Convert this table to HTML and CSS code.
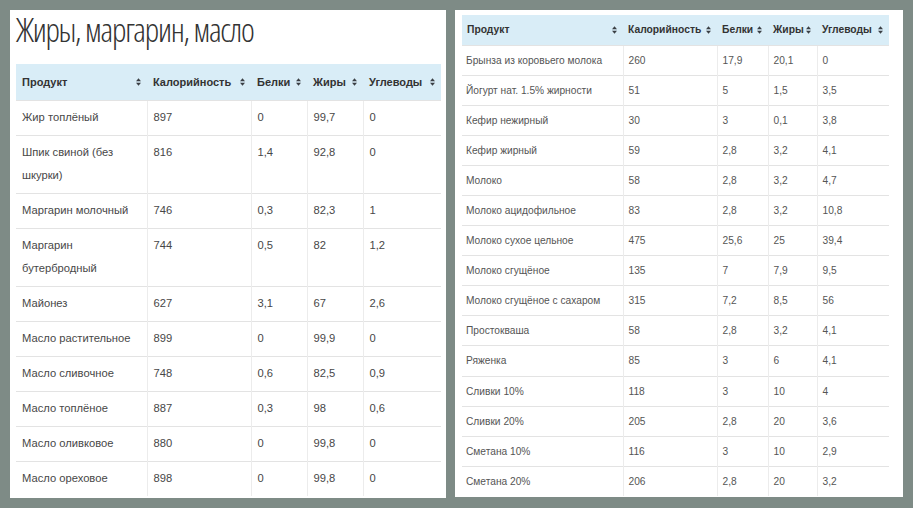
FILE: index.html
```html
<!DOCTYPE html>
<html lang="ru">
<head>
<meta charset="utf-8">
<link rel="stylesheet" href="styles.css">
</head>
<body>
<div class="page">
  <section class="panel panel-left">
    <h1 class="title">Жиры, маргарин, масло</h1>
    <table class="tbl tbl-left">
      <colgroup><col class="c1"><col class="c2"><col class="c3"><col class="c4"><col class="c5"></colgroup>
      <thead>
        <tr>
          <th><div class="th-in"><span>Продукт</span><svg class="sort" viewBox="0 0 6 9"><path d="M0 3.6L3 0L6 3.6Z M0 5.4L3 9L6 5.4Z"/></svg></div></th>
          <th><div class="th-in"><span>Калорийность</span><svg class="sort" viewBox="0 0 6 9"><path d="M0 3.6L3 0L6 3.6Z M0 5.4L3 9L6 5.4Z"/></svg></div></th>
          <th><div class="th-in"><span>Белки</span><svg class="sort" viewBox="0 0 6 9"><path d="M0 3.6L3 0L6 3.6Z M0 5.4L3 9L6 5.4Z"/></svg></div></th>
          <th><div class="th-in"><span>Жиры</span><svg class="sort" viewBox="0 0 6 9"><path d="M0 3.6L3 0L6 3.6Z M0 5.4L3 9L6 5.4Z"/></svg></div></th>
          <th><div class="th-in"><span>Углеводы</span><svg class="sort" viewBox="0 0 6 9"><path d="M0 3.6L3 0L6 3.6Z M0 5.4L3 9L6 5.4Z"/></svg></div></th>
        </tr>
      </thead>
      <tbody>
        <tr><td>Жир топлёный</td><td>897</td><td>0</td><td>99,7</td><td>0</td></tr>
        <tr><td>Шпик свиной (без шкурки)</td><td>816</td><td>1,4</td><td>92,8</td><td>0</td></tr>
        <tr><td>Маргарин молочный</td><td>746</td><td>0,3</td><td>82,3</td><td>1</td></tr>
        <tr><td>Маргарин бутербродный</td><td>744</td><td>0,5</td><td>82</td><td>1,2</td></tr>
        <tr><td>Майонез</td><td>627</td><td>3,1</td><td>67</td><td>2,6</td></tr>
        <tr><td>Масло растительное</td><td>899</td><td>0</td><td>99,9</td><td>0</td></tr>
        <tr><td>Масло сливочное</td><td>748</td><td>0,6</td><td>82,5</td><td>0,9</td></tr>
        <tr><td>Масло топлёное</td><td>887</td><td>0,3</td><td>98</td><td>0,6</td></tr>
        <tr><td>Масло оливковое</td><td>880</td><td>0</td><td>99,8</td><td>0</td></tr>
        <tr><td>Масло ореховое</td><td>898</td><td>0</td><td>99,8</td><td>0</td></tr>
      </tbody>
    </table>
  </section>
  <section class="panel panel-right">
    <table class="tbl tbl-right">
      <colgroup><col class="c1"><col class="c2"><col class="c3"><col class="c4"><col class="c5"></colgroup>
      <thead>
        <tr>
          <th><div class="th-in"><span>Продукт</span><svg class="sort" viewBox="0 0 6 9"><path d="M0 3.6L3 0L6 3.6Z M0 5.4L3 9L6 5.4Z"/></svg></div></th>
          <th><div class="th-in"><span>Калорийность</span><svg class="sort" viewBox="0 0 6 9"><path d="M0 3.6L3 0L6 3.6Z M0 5.4L3 9L6 5.4Z"/></svg></div></th>
          <th><div class="th-in"><span>Белки</span><svg class="sort" viewBox="0 0 6 9"><path d="M0 3.6L3 0L6 3.6Z M0 5.4L3 9L6 5.4Z"/></svg></div></th>
          <th><div class="th-in"><span>Жиры</span><svg class="sort" viewBox="0 0 6 9"><path d="M0 3.6L3 0L6 3.6Z M0 5.4L3 9L6 5.4Z"/></svg></div></th>
          <th><div class="th-in"><span>Углеводы</span><svg class="sort" viewBox="0 0 6 9"><path d="M0 3.6L3 0L6 3.6Z M0 5.4L3 9L6 5.4Z"/></svg></div></th>
        </tr>
      </thead>
      <tbody>
        <tr><td>Брынза из коровьего молока</td><td>260</td><td>17,9</td><td>20,1</td><td>0</td></tr>
        <tr><td>Йогурт нат. 1.5% жирности</td><td>51</td><td>5</td><td>1,5</td><td>3,5</td></tr>
        <tr><td>Кефир нежирный</td><td>30</td><td>3</td><td>0,1</td><td>3,8</td></tr>
        <tr><td>Кефир жирный</td><td>59</td><td>2,8</td><td>3,2</td><td>4,1</td></tr>
        <tr><td>Молоко</td><td>58</td><td>2,8</td><td>3,2</td><td>4,7</td></tr>
        <tr><td>Молоко ацидофильное</td><td>83</td><td>2,8</td><td>3,2</td><td>10,8</td></tr>
        <tr><td>Молоко сухое цельное</td><td>475</td><td>25,6</td><td>25</td><td>39,4</td></tr>
        <tr><td>Молоко сгущёное</td><td>135</td><td>7</td><td>7,9</td><td>9,5</td></tr>
        <tr><td>Молоко сгущёное с сахаром</td><td>315</td><td>7,2</td><td>8,5</td><td>56</td></tr>
        <tr><td>Простокваша</td><td>58</td><td>2,8</td><td>3,2</td><td>4,1</td></tr>
        <tr><td>Ряженка</td><td>85</td><td>3</td><td>6</td><td>4,1</td></tr>
        <tr><td>Сливки 10%</td><td>118</td><td>3</td><td>10</td><td>4</td></tr>
        <tr><td>Сливки 20%</td><td>205</td><td>2,8</td><td>20</td><td>3,6</td></tr>
        <tr><td>Сметана 10%</td><td>116</td><td>3</td><td>10</td><td>2,9</td></tr>
        <tr><td>Сметана 20%</td><td>206</td><td>2,8</td><td>20</td><td>3,2</td></tr>
      </tbody>
    </table>
  </section>
</div>
</body>
</html>
```

FILE: styles.css
```css
* { box-sizing: border-box; }
html, body { margin: 0; padding: 0; }
body {
  width: 913px;
  height: 508px;
  background: #7e8b86;
  font-family: "Liberation Sans", Arial, sans-serif;
  overflow: hidden;
}
.page {
  display: flex;
  gap: 9px;
  padding: 10px 0 0 10px;
  align-items: flex-start;
}
.panel {
  background: #fff;
}
.panel-left {
  width: 436px;
  height: 488px;
  padding: 0 5px 0 6px;
}
.panel-right {
  width: 448px;
  height: 487px;
  padding: 5px 0 0 7px;
}
.title {
  margin: 0;
  height: 54px;
  padding: 0;
  font-family: "Open Sans", "DejaVu Sans", sans-serif;
  font-stretch: 75%;
  font-weight: 300;
  font-size: 33px;
  line-height: 40px;
  color: #333;
  letter-spacing: -1.3px;
}
.tbl {
  border-collapse: collapse;
  table-layout: fixed;
}
.tbl th {
  background: #d9edf7;
  color: #333;
  font-weight: bold;
  text-align: left;
}
.th-in {
  display: flex;
  align-items: center;
  justify-content: space-between;
}
.sort {
  width: 5px;
  height: 8px;
  fill: #3a3f44;
  flex: none;
}
.tbl td {
  border-top: 1px solid #e3e3e3;
  vertical-align: top;
}
.tbl td + td { border-left: 1px solid #ececec; }

.tbl-left { width: 425px; }
.tbl-left .c1 { width: 131px; }
.tbl-left .c2 { width: 104px; }
.tbl-left .c3 { width: 56px; }
.tbl-left .c4 { width: 56px; }
.tbl-left .c5 { width: 78px; }
.tbl-left th {
  height: 36px;
  padding: 0 6px 0 6px;
  font-size: 11px;
}
.tbl-left td {
  font-size: 11.2px;
  line-height: 23px;
  padding: 5px 7px 6px 6px;
  color: #474747;
}

.tbl-right { width: 427px; }
.tbl-right .c1 { width: 161px; }
.tbl-right .c2 { width: 94px; }
.tbl-right .c3 { width: 51px; }
.tbl-right .c4 { width: 49px; }
.tbl-right .c5 { width: 72px; }
.tbl-right th {
  height: 30px;
  padding: 0 6px 0 5px;
  font-size: 10.3px;
}
.tbl-right td {
  font-size: 10.2px;
  line-height: 19px;
  height: 30.1px;
  padding: 5px 5px 5px 5px;
  color: #555;
}
.tbl-right td:first-child { padding-left: 4px; }
```
